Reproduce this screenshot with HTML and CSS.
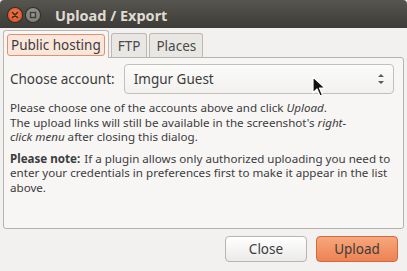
FILE: index.html
```html
<!DOCTYPE html>
<html>
<head>
<meta charset="utf-8">
<link rel="stylesheet" href="styles.css">
</head>
<body>
<div class="window">
  <div class="titlebar">
    <span class="wbtn close"><svg width="14" height="14" viewBox="0 0 14 14"><path d="M4.5 4.5 L9.5 9.5 M9.5 4.5 L4.5 9.5" stroke="#3a2a22" stroke-width="1.6" stroke-linecap="round"/></svg></span>
    <span class="wbtn min"><svg width="14" height="14" viewBox="0 0 14 14"><rect x="4.5" y="4.5" width="5" height="5" fill="none" stroke="#3a3a36" stroke-width="1.4"/></svg></span>
    <span class="title">Upload / Export</span>
  </div>
  <div class="body">
    <div class="tabs">
      <div class="tab active"><span class="focus">Public hosting</span></div>
      <div class="tab">FTP</div>
      <div class="tab">Places</div>
    </div>
    <div class="panel">
      <div class="row">
        <span class="label">Choose account:</span>
        <div class="combo">
          <span>Imgur Guest</span>
          <svg class="arrows" width="8" height="14" viewBox="0 0 8 14"><path d="M1 5 L4 2 L7 5 Z M1 9 L4 12 L7 9 Z" fill="#5a5a56"/></svg>
        </div>
      </div>
      <p class="para">Please choose one of the accounts above and click <i>Upload</i>.<br>The upload links will still be available in the screenshot's <i>right-<br>click menu</i> after closing this dialog.</p>
      <p class="para"><b class="note">Please note:</b> If a plugin allows only authorized uploading you need to<br>enter your credentials in preferences first to make it appear in the list<br>above.</p>
    </div>
    <div class="actions">
      <button class="btn">Close</button>
      <button class="btn primary">Upload</button>
    </div>
  </div>
  <svg class="cursor" width="14" height="22" viewBox="0 0 14 22"><path d="M1 1 L1 17 L5 13 L8 20 L10.5 19 L7.5 12 L13 12 Z" fill="#111" stroke="#fff" stroke-width="1.2" stroke-linejoin="round"/></svg>
</div>
</body>
</html>
```
FILE: styles.css
```css
* { box-sizing: border-box; }
html, body { margin: 0; padding: 0; }
body {
  width: 407px;
  height: 271px;
  overflow: hidden;
  font-family: "Noto Sans", "DejaVu Sans", sans-serif;
  font-size: 12px;
  color: #3c3c3c;
  background: #f2f1f0;
}
.window {
  position: relative;
  width: 407px;
  height: 271px;
  display: flex;
  flex-direction: column;
}
.titlebar {
  height: 28px;
  background: linear-gradient(#57554f, #3c3b37);
  display: flex;
  align-items: center;
  padding-left: 8px;
  gap: 4px;
  border-radius: 4px 4px 0 0;
}
.wbtn {
  width: 14px;
  height: 14px;
  border-radius: 50%;
  display: inline-flex;
  margin-top: 2px;
}
.wbtn.close {
  background: radial-gradient(circle at 50% 40%, #f47a4a, #dc4a1c);
  box-shadow: 0 0 0 1px #2e2d2a;
}
.wbtn.min {
  background: radial-gradient(circle at 50% 40%, #9c9a94, #75736d);
  box-shadow: 0 0 0 1px #2e2d2a;
}
.title {
  margin-left: 11px;
  margin-top: 2px;
  font-weight: bold;
  font-size: 14.5px;
  color: #dfdbd2;
}
.body {
  flex: 1;
  display: flex;
  flex-direction: column;
  padding: 2px 3px 0 3px;
}
.tabs {
  display: flex;
  align-items: flex-end;
  gap: 2px;
  height: 27px;
  position: relative;
  z-index: 1;
}
.tab {
  height: 24px;
  padding: 0 6px;
  display: flex;
  align-items: center;
  font-size: 13.5px;
  background: #e9e7e4;
  border: 1px solid #bcb9b4;
  border-bottom: none;
  border-radius: 3px 3px 0 0;
  color: #4a4a48;
}
.tab.active {
  padding: 0 3px;
  background: #f7f6f5;
  margin-bottom: -1px;
  height: 28px;
}
.focus {
  border: 1px solid #e2906c;
  background: #fbe6dc;
  border-radius: 3px;
  padding: 1px 3px 1px 3px;
  font-size: 13.5px;
  color: #3c3c3c;
}
.panel {
  height: 172px;
  background: #f7f6f5;
  border: 1px solid #b6b3ae;
  border-radius: 0 3px 3px 3px;
  padding: 6px 7px 0 6px;
}
.row {
  display: flex;
  align-items: center;
  gap: 9px;
}
.label {
  font-size: 13.5px;
}
.combo {
  width: 270px;
  height: 30px;
  border: 1px solid #c3c0bb;
  border-radius: 4px;
  background: linear-gradient(#fbfbfa, #f2f1f0);
  display: flex;
  align-items: center;
  justify-content: space-between;
  padding: 0 8px 0 9px;
  font-size: 13.5px;
  color: #3c3c3c;
}
.para {
  margin: 7px 0 0 0;
  line-height: 14.6px;
  font-size: 11.6px;
  white-space: nowrap;
}
.para + .para { margin-top: 7px; }
.note { margin-right: 1px; }
.actions {
  display: flex;
  justify-content: flex-end;
  gap: 9px;
  padding: 7px 6px 0 0;
}
.btn {
  width: 82px;
  height: 26px;
  border: 1px solid #b8b5b0;
  border-radius: 4px;
  background: linear-gradient(#ffffff, #ebeae8);
  font-family: inherit;
  font-size: 13.5px;
  color: #3c3c3c;
}
.btn.primary {
  background: linear-gradient(#f6a77c, #ee8253);
  border-color: #d3693c;
}
.cursor {
  position: absolute;
  left: 312px;
  top: 76px;
}
```
